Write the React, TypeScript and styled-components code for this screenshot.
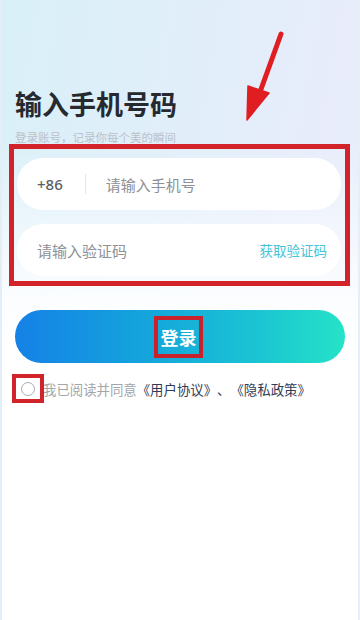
import React from "react";
import styled, { createGlobalStyle } from "styled-components";

const Global = createGlobalStyle`
  html, body { margin: 0; padding: 0; }
  body {
    font-family: "Noto Sans CJK SC", "Noto Sans", sans-serif;
    background: #ffffff;
  }
  * { box-sizing: border-box; }
`;

const Page = styled.div`
  position: relative;
  width: 360px;
  height: 620px;
  overflow: hidden;
  padding: 86px 15px 0 15px;
  background:
    linear-gradient(180deg, rgba(255,255,255,0) 0px, rgba(255,255,255,0) 140px, #fbfdff 300px, #ffffff 360px),
    linear-gradient(100deg, #d9f0f8 0%, #e2eefa 50%, #e8ecfb 75%, #e4f1fb 100%);
  box-shadow: inset 2px 0 0 #e3eef6, inset -2px 0 0 #e8eef6;
`;

const Title = styled.h1`
  margin: 0;
  font-size: 27px;
  line-height: 36px;
  font-weight: 700;
  color: #262a2e;
`;

const Subtitle = styled.p`
  margin: 8px 0 0 0;
  font-size: 11.5px;
  line-height: 14px;
  color: #bcc0c8;
`;

const HighlightBox = styled.div`
  margin: 0 -5px 0 -6px;
  border: 5px solid #d2232a;
  padding: 9px 4px 5px 3px;
  display: flex;
  flex-direction: column;
  gap: 14px;
`;

const Field = styled.div`
  height: 52px;
  border-radius: 26px;
  background: #ffffff;
  display: flex;
  align-items: center;
  padding: 0 14px 0 20px;
`;

const Prefix = styled.span`
  font-size: 15px;
  font-weight: 500;
  color: #5b5e63;
  font-family: "Noto Sans", "Noto Sans CJK SC", sans-serif;
`;

const Divider = styled.span`
  width: 1px;
  height: 20px;
  background: #e2e4e8;
  margin: 0 20px 0 22px;
`;

const Placeholder = styled.span`
  flex: 1;
  font-size: 15px;
  color: #8e9196;
`;

const CodeLink = styled.span`
  font-size: 13.5px;
  color: #46c4d7;
`;

const LoginButton = styled.button`
  margin-top: 24px;
  width: 330px;
  height: 53px;
  border: none;
  border-radius: 27px;
  background: linear-gradient(90deg, #1581e6 0%, #14a5dc 40%, #1bc6d2 75%, #25e3c7 100%);
  display: flex;
  align-items: center;
  justify-content: center;
  padding: 0;
  cursor: pointer;
`;

const LoginMark = styled.span`
  border: 4px solid #c8232d;
  width: 49px;
  height: 42px;
  display: flex;
  align-items: center;
  justify-content: center;
  margin-left: -3px;
  font-family: "Noto Sans CJK SC", sans-serif;
  font-size: 18px;
  font-weight: 700;
  color: #ffffff;
`;

const AgreeRow = styled.div`
  margin-top: 11px;
  display: flex;
  align-items: center;
  margin-left: -3px;
`;

const CheckMark = styled.span`
  width: 32px;
  height: 29px;
  border: 4px solid #d2232a;
  display: flex;
  align-items: center;
  justify-content: center;
  background: #ffffff;
  position: relative;
  z-index: 1;
`;

const Circle = styled.span`
  width: 14px;
  height: 14px;
  border-radius: 50%;
  border: 1px solid #a9acb2;
`;

const AgreeText = styled.span`
  margin-left: -1px;
  font-size: 13.4px;
  color: #a3a6ab;
  white-space: nowrap;
  text-spacing-trim: space-all;
`;

const LinkText = styled.span`
  color: #2f3d5a;
`;

const Arrow = styled.svg`
  position: absolute;
  left: 235px;
  top: 25px;
  width: 60px;
  height: 105px;
  pointer-events: none;
`;

export default function App() {
  return (
    <>
      <Global />
      <Page>
        <Arrow viewBox="235 25 60 105">
          <line x1="281" y1="34" x2="260" y2="92" stroke="#e01e22" strokeWidth="5" strokeLinecap="round" />
          <polygon points="247,120 248,86 269,93" fill="#e01e22" stroke="#e01e22" strokeWidth="1.5" strokeLinejoin="round" />
        </Arrow>
        <Title>输入手机号码</Title>
        <Subtitle>登录账号，记录你每个美的瞬间</Subtitle>
        <HighlightBox>
          <Field>
            <Prefix>+86</Prefix>
            <Divider />
            <Placeholder>请输入手机号</Placeholder>
          </Field>
          <Field>
            <Placeholder>请输入验证码</Placeholder>
            <CodeLink>获取验证码</CodeLink>
          </Field>
        </HighlightBox>
        <LoginButton>
          <LoginMark>登录</LoginMark>
        </LoginButton>
        <AgreeRow>
          <CheckMark>
            <Circle />
          </CheckMark>
          <AgreeText>
            我已阅读并同意<LinkText>《用户协议》、《隐私政策》</LinkText>
          </AgreeText>
        </AgreeRow>
      </Page>
    </>
  );
}
